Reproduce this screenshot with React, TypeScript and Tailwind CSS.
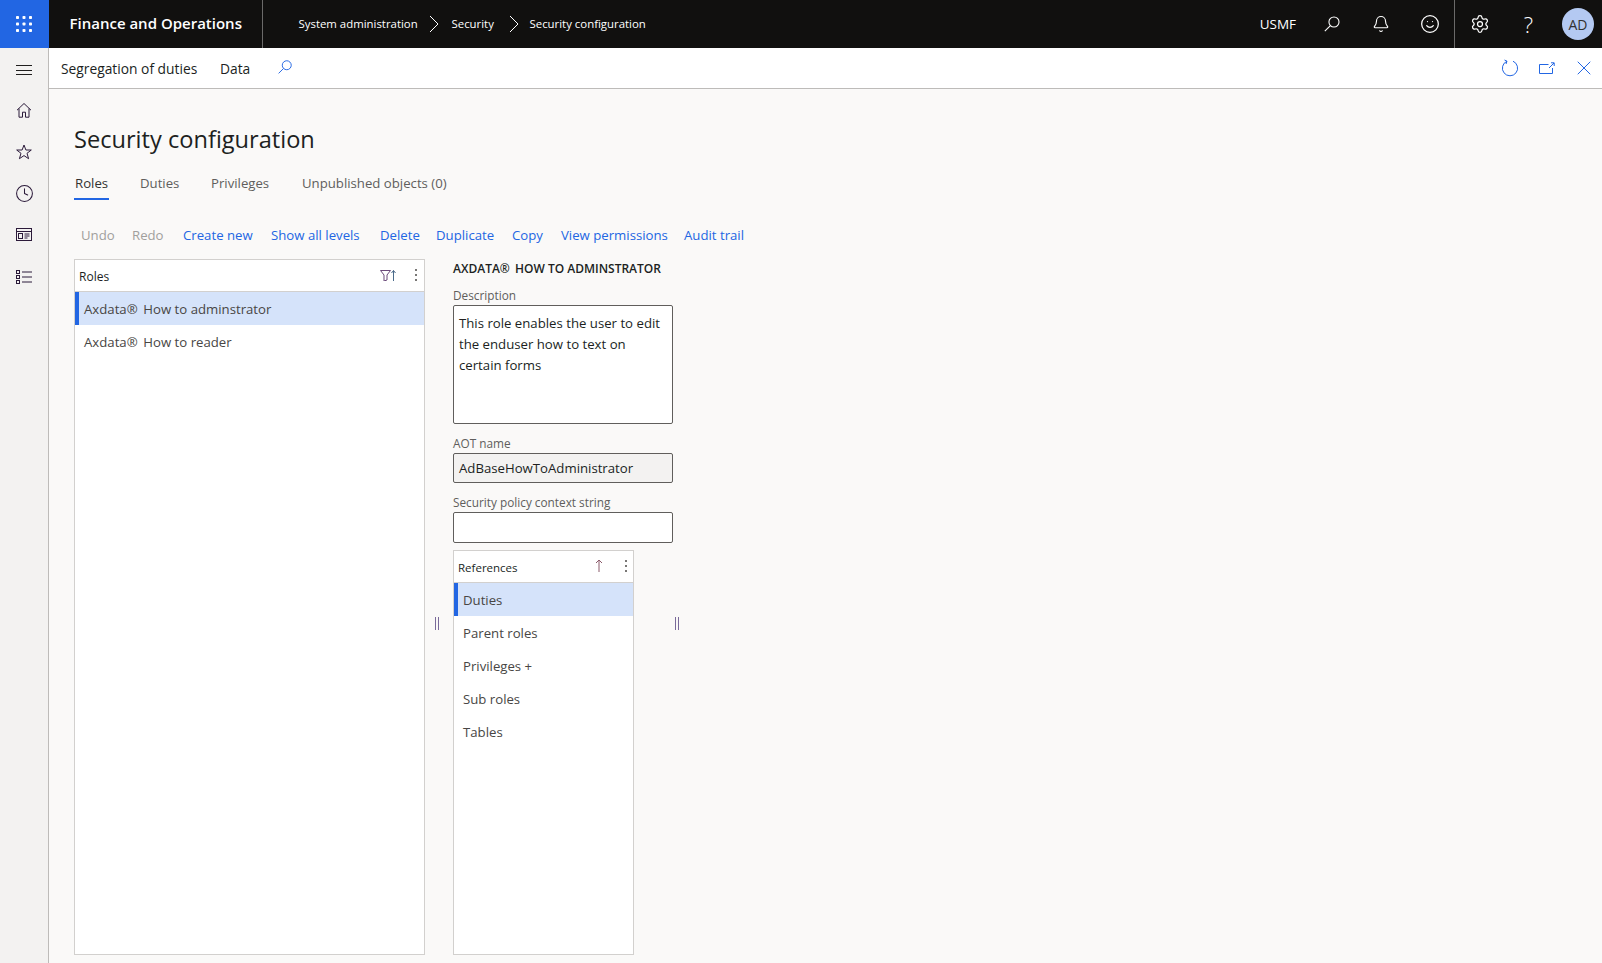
import { Bell, Clock, Settings, Smile, X } from "lucide-react";

const uiFont = "font-['Open_Sans','Noto_Sans',sans-serif]";

const actionItems = [
  { label: "Undo", width: "w-[51px]", disabled: true },
  { label: "Redo", width: "w-[51px]", disabled: true },
  { label: "Create new", width: "w-[88px]" },
  { label: "Show all levels", width: "w-[109px]" },
  { label: "Delete", width: "w-[56px]" },
  { label: "Duplicate", width: "w-[76px]" },
  { label: "Copy", width: "w-[49px]" },
  { label: "View permissions", width: "w-[123px]" },
  { label: "Audit trail", width: "w-[70px]" },
];

const tabs = [
  { label: "Roles", width: "w-[65px]", active: true },
  { label: "Duties", width: "w-[71px]" },
  { label: "Privileges", width: "w-[91px]" },
  { label: "Unpublished objects (0)", width: "w-[160px]" },
];

const references = ["Duties", "Parent roles", "Privileges +", "Sub roles", "Tables"];

function MirroredSearch({ className }: { className: string }) {
  return (
    <svg viewBox="0 0 20 20" fill="none" stroke="currentColor" strokeWidth="1.2" className={className}>
      <circle cx="12.2" cy="7.8" r="5.6" />
      <path d="M8.2 11.8 2 18" />
    </svg>
  );
}

function Waffle() {
  const dots = [0, 1, 2].flatMap((row) => [0, 1, 2].map((col) => [col, row]));
  return (
    <svg viewBox="0 0 16 16" className="h-4 w-4 fill-white">
      {dots.map(([col, row]) => (
        <rect key={`${col}-${row}`} x={col * 6.5} y={row * 6.5} width="3" height="3" rx="0.8" />
      ))}
    </svg>
  );
}

function HomeIcon() {
  return (
    <svg viewBox="0 0 16 16" fill="none" stroke="#2b1a3a" strokeWidth="1" className="h-4 w-4">
      <path d="M1 8.2 8 1.5l7 6.7M3 6.5v8.7h3.5v-5h3v5H13V6.5" />
    </svg>
  );
}

function StarIcon() {
  return (
    <svg viewBox="0 0 16 16" fill="none" stroke="#2b1a3a" strokeWidth="1" className="h-4 w-4">
      <path d="M8 1l1.9 5h5.4l-4.3 3.3 1.6 5.4L8 11.6l-4.6 3.1L5 9.3.7 6h5.4z" />
    </svg>
  );
}

function ModuleIcon() {
  return (
    <svg viewBox="0 0 16 13" fill="none" stroke="#2b1a3a" strokeWidth="1" className="h-[13px] w-4">
      <rect x="0.5" y="0.5" width="15" height="12" />
      <path d="M0.5 3.5h15" />
      <rect x="2.5" y="5.5" width="4" height="5" />
      <path d="M8.5 6h5M8.5 8h5M8.5 10h3" />
    </svg>
  );
}

function ListIcon() {
  return (
    <svg viewBox="0 0 16 14" fill="none" stroke="#2b1a3a" strokeWidth="1" className="h-[14px] w-4">
      <rect x="0.5" y="0.5" width="3" height="3" />
      <rect x="0.5" y="5.5" width="3" height="3" />
      <rect x="0.5" y="10.5" width="3" height="3" />
      <path d="M6 2h10M6 7h10M6 12h10" />
    </svg>
  );
}

function Kebab() {
  return (
    <span className="flex h-[12px] flex-col justify-between">
      <span className="h-[2px] w-[2px] bg-[#797775]" />
      <span className="h-[2px] w-[2px] bg-[#797775]" />
      <span className="h-[2px] w-[2px] bg-[#797775]" />
    </span>
  );
}

function Splitter() {
  return (
    <span className="flex h-[13px] w-[4px] justify-between">
      <span className="w-px bg-[#7a6a9a]" />
      <span className="w-px bg-[#7a6a9a]" />
    </span>
  );
}

function ListRow({ selected, children }: { selected?: boolean; children: React.ReactNode }) {
  return (
    <div
      className={`flex h-[33px] items-center border-l-4 pl-[5px] pt-[2px] text-[13.2px] text-[#484644] ${
        selected ? "border-[#2266e3] bg-[#d5e3fa]" : "border-transparent"
      }`}
    >
      {children}
    </div>
  );
}

export default function App() {
  return (
    <div className={`flex h-[963px] w-[1602px] flex-col overflow-hidden bg-[#faf9f8] ${uiFont}`}>
      {/* top bar */}
      <header className="flex h-12 shrink-0 items-center bg-[#11100f] text-white">
        <div className="flex h-12 w-[48.5px] items-center justify-center bg-[#2266e3]">
          <Waffle />
        </div>
        <div className="flex h-12 w-[214px] items-center border-r border-[#6b6a69] pb-[2px] pl-[21px] text-[15px] font-semibold">
          Finance and Operations
        </div>
        <nav className="ml-[36px] flex items-center text-[11.4px]">
          <span className="w-[118px] whitespace-nowrap">System administration</span>
          <svg viewBox="0 0 10 18" fill="none" stroke="currentColor" className="ml-[12px] h-[18px] w-[10px]">
            <path d="M1 1l8 8-8 8" />
          </svg>
          <span className="ml-[13px] w-[43px]">Security</span>
          <svg viewBox="0 0 10 18" fill="none" stroke="currentColor" className="ml-[14px] h-[18px] w-[10px]">
            <path d="M1 1l8 8-8 8" />
          </svg>
          <span className="ml-[11px] whitespace-nowrap">Security configuration</span>
        </nav>
        <div className="ml-auto flex items-center">
          <span className="mr-[11px] text-[13.5px]">USMF</span>
          <span className="flex w-[49px] justify-center">
            <MirroredSearch className="h-[18px] w-[18px]" />
          </span>
          <span className="flex w-[49px] justify-center">
            <Bell size={18} strokeWidth={1.5} />
          </span>
          <span className="flex w-[49px] justify-center">
            <Smile size={20} strokeWidth={1.5} />
          </span>
          <span className="h-12 w-px bg-[#6b6a69]" />
          <span className="flex w-[49px] justify-center">
            <Settings size={20} strokeWidth={1.5} />
          </span>
          <span className="flex w-[49px] justify-center text-[22px] font-light leading-none">?</span>
          <span className="ml-[9px] mr-2 flex h-8 w-8 items-center justify-center rounded-full bg-[#b4c9f2] text-[14px] text-[#323130]">
            AD
          </span>
        </div>
      </header>

      <div className="flex min-h-0 flex-1">
        {/* left rail */}
        <aside className="flex w-[49px] shrink-0 flex-col items-center border-r border-[#bdbbb9] bg-[#f3f2f1] pt-[17px] text-[#2b1a3a]">
          <div className="flex h-[10px] w-4 flex-col justify-between">
            <span className="h-px bg-[#201f1e]" />
            <span className="h-px bg-[#201f1e]" />
            <span className="h-px bg-[#201f1e]" />
          </div>
          <div className="mt-[14px] flex flex-col items-center [&>span]:flex [&>span]:h-[41.7px] [&>span]:items-center">
            <span>
              <HomeIcon />
            </span>
            <span>
              <StarIcon />
            </span>
            <span>
              <Clock size={19} strokeWidth={1.3} />
            </span>
            <span>
              <ModuleIcon />
            </span>
            <span>
              <ListIcon />
            </span>
          </div>
        </aside>

        <div className="flex min-w-0 flex-1 flex-col">
          {/* action strip */}
          <div className="flex h-[41px] shrink-0 items-center border-b border-[#bdbbb9] bg-white text-[#201f1e]">
            <span className="ml-3 w-[159px] whitespace-nowrap pt-[2px] text-[13.8px]">Segregation of duties</span>
            <span className="pt-[2px] text-[13.8px]">Data</span>
            <MirroredSearch className="mb-[2px] ml-[27px] h-4 w-4 text-[#2266e3]" />
            <div className="ml-auto flex items-center text-[#2266e3]">
              <span className="flex w-[37px] justify-center">
                <svg viewBox="0 0 18 18" fill="none" stroke="currentColor" strokeWidth="1" className="h-[18px] w-[18px]">
                  <path d="M6 2.2a7.6 7.6 0 1 0 6 0M6 2.2 3.5 1M6 2.2 5 5" />
                </svg>
              </span>
              <span className="flex w-[37px] justify-center">
                <svg viewBox="0 0 16 12" fill="none" stroke="currentColor" strokeWidth="1" className="h-3 w-4">
                  <path d="M9.5 2.5H.5v9h13V6M10 6l5-5M12 .8h3.2V4" />
                </svg>
              </span>
              <span className="flex w-[37px] justify-center">
                <X size={24} strokeWidth={1} />
              </span>
            </div>
          </div>

          {/* page */}
          <main className="flex min-h-0 flex-1 flex-col pl-[25px] pt-[34px]">
            <h1 className="h-8 text-[23.6px] font-normal leading-8 text-[#201f1e]">Security configuration</h1>
            <div className="mt-[19px] flex h-[32px] text-[13.2px]">
              {tabs.map((tab) => (
                <div key={tab.label} className={tab.width}>
                  <span
                    className={`inline-block h-[25px] whitespace-nowrap border-b-2 px-[1px] leading-[16px] ${
                      tab.active ? "border-[#2266e3] text-[#323130]" : "border-transparent text-[#605e5c]"
                    }`}
                  >
                    {tab.label}
                  </span>
                </div>
              ))}
            </div>
            <div className="mt-[20px] flex h-[20px] items-center pl-[7px] text-[13.2px]">
              {actionItems.map((item) => (
                <span
                  key={item.label}
                  className={`${item.width} whitespace-nowrap ${item.disabled ? "text-[#a19f9d]" : "text-[#2266e3]"}`}
                >
                  {item.label}
                </span>
              ))}
            </div>

            <div className="mt-[13px] flex min-h-0 flex-1 pb-2">
              {/* roles list */}
              <section className="flex w-[351px] shrink-0 flex-col border border-[#d2d0ce] bg-white">
                <div className="flex h-[32px] items-center border-b border-[#d2d0ce] pl-1 pr-[7px] text-[12px] text-[#201f1e]">
                  <span className="mt-[3px]">Roles</span>
                  <svg viewBox="0 0 16 11" fill="none" strokeWidth="1" className="ml-auto h-[11px] w-4">
                    <path d="M.5 .5h10L7 5v5l-3 1V5z" stroke="#6b4a7a" />
                    <path d="M13.5 11V.5M11.5 3l2-2.5 2 2.5" stroke="#4a6a8a" />
                  </svg>
                  <span className="mb-[1px] ml-[19px]">
                    <Kebab />
                  </span>
                </div>
                <ListRow selected>Axdata®{"\u2009"} How to adminstrator</ListRow>
                <ListRow>Axdata®{"\u2009"} How to reader</ListRow>
              </section>

              <div className="flex w-[28px] shrink-0 items-center justify-center pr-[4px]">
                <span className="mt-[32px]">
                  <Splitter />
                </span>
              </div>

              {/* detail column */}
              <section className="flex w-[220px] shrink-0 flex-col">
                <h2 className="mt-[2px] text-[12px] font-semibold uppercase leading-[16px] text-[#201f1e]">
                  Axdata®{"\u2009"} How to adminstrator
                </h2>
                <label className="mt-[10px] text-[11.8px] leading-[16px] text-[#605e5c]">Description</label>
                <div className="mt-[2px] h-[119px] rounded-[2px] border border-[#605e5c] bg-white px-[5px] pt-[7px] text-[13.2px] leading-[21px] text-[#201f1e]">
                  This role enables the user to edit the enduser how to text on certain forms
                </div>
                <label className="mt-[11px] text-[11.8px] leading-[16px] text-[#605e5c]">AOT name</label>
                <div className="mt-[2px] flex h-[30px] items-center rounded-[2px] border border-[#605e5c] bg-[#f3f2f1] px-[5px] pt-[2px] text-[13.2px] text-[#201f1e]">
                  AdBaseHowToAdministrator
                </div>
                <label className="mt-[11px] text-[11.8px] leading-[16px] text-[#605e5c]">
                  Security policy context string
                </label>
                <div className="mt-[2px] h-[31px] rounded-[2px] border border-[#605e5c] bg-white" />

                {/* references */}
                <div className="mt-[7px] flex min-h-0 w-[181px] flex-1 flex-col border border-[#d2d0ce] bg-white">
                  <div className="flex h-[32px] items-center border-b border-[#d2d0ce] pl-1 pr-[6px] text-[11.5px] text-[#201f1e]">
                    <span className="mt-[2px]">References</span>
                    <svg viewBox="0 0 8 13" fill="none" stroke="#8a5a6a" strokeWidth="1" className="mb-[3px] ml-auto h-[13px] w-2">
                      <path d="M4 13V1M1 4l3-3 3 3" />
                    </svg>
                    <span className="mb-[1px] ml-[22px]">
                      <Kebab />
                    </span>
                  </div>
                  {references.map((name, i) => (
                    <ListRow key={name} selected={i === 0}>
                      {name}
                    </ListRow>
                  ))}
                </div>
              </section>

              <div className="flex w-[6px] shrink-0 items-center justify-end">
                <span className="mt-[32px]">
                  <Splitter />
                </span>
              </div>
            </div>
          </main>
        </div>
      </div>
    </div>
  );
}
